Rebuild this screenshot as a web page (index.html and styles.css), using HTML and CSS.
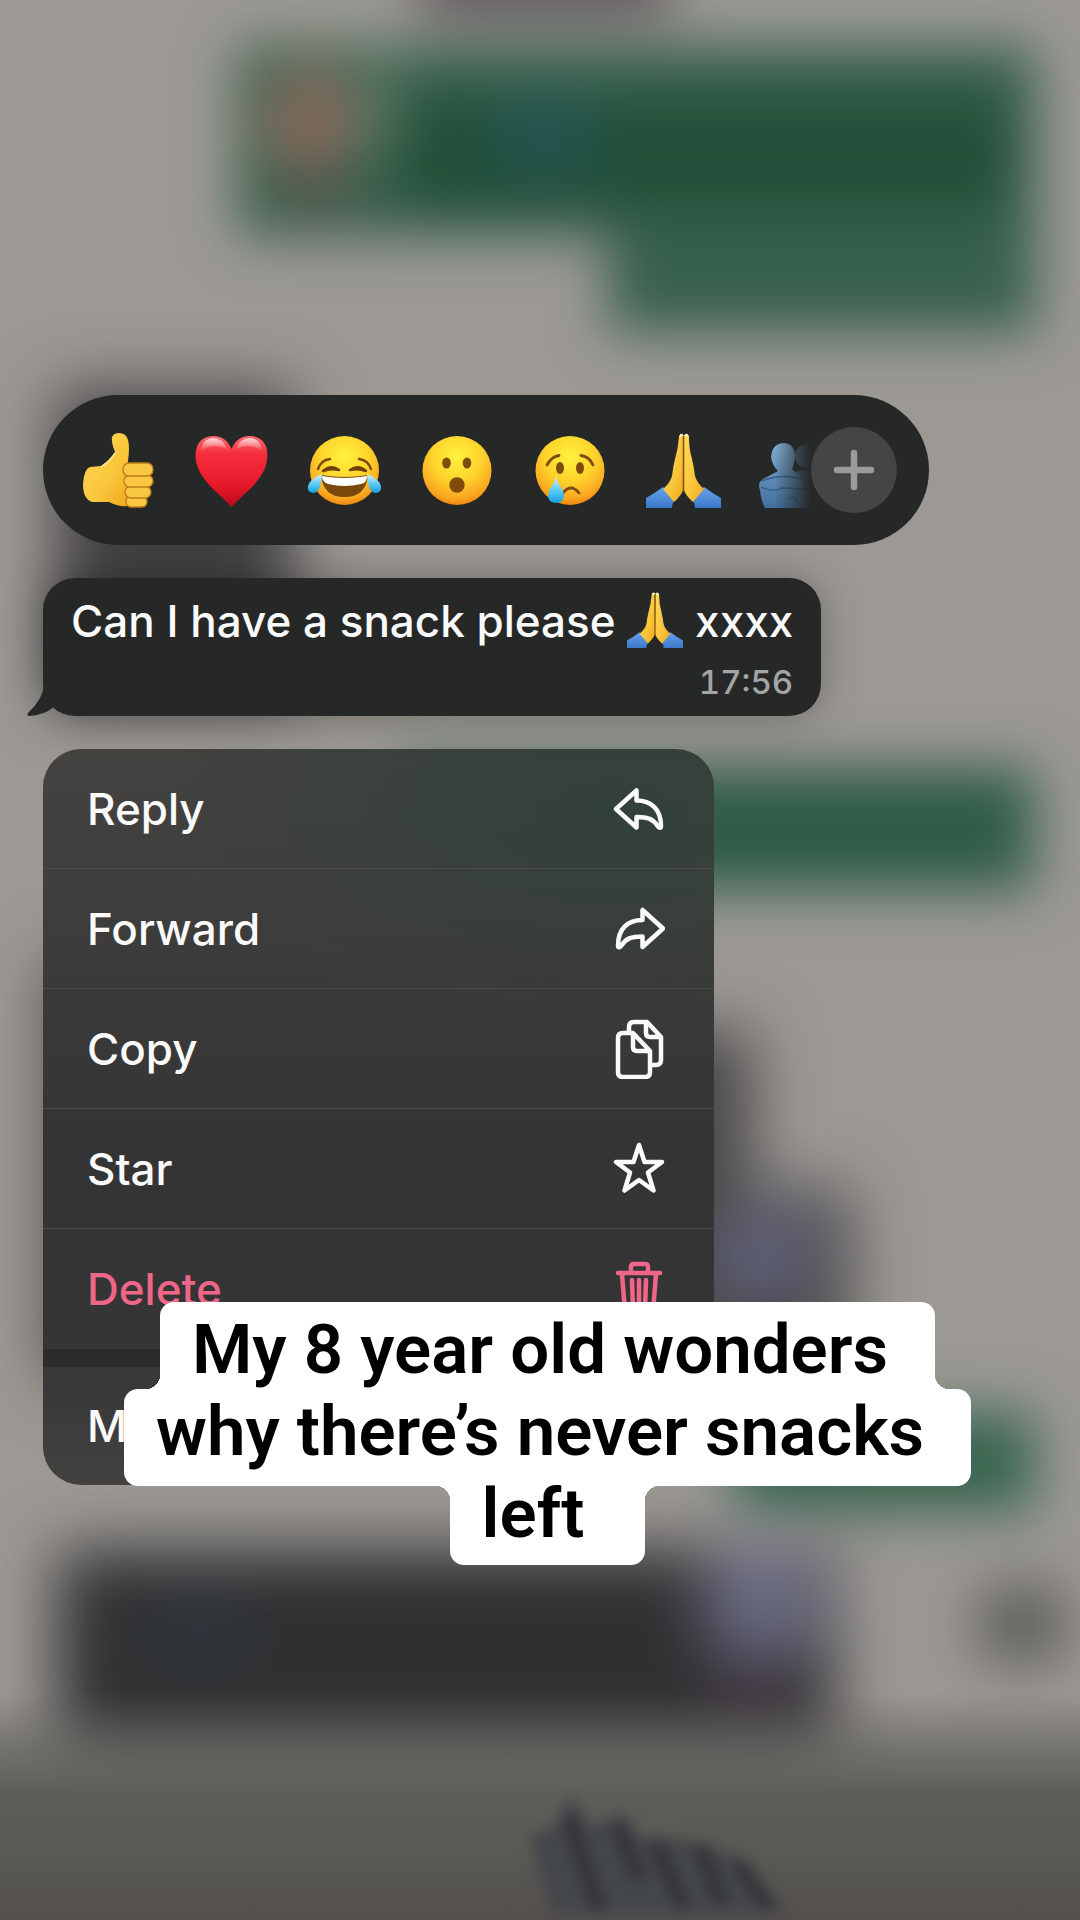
FILE: index.html
```html
<!DOCTYPE html>
<html lang="en">
<head>
<meta charset="utf-8">
<meta name="viewport" content="width=device-width, initial-scale=1">
<title>Message actions</title>
<link rel="stylesheet" href="styles.css">
</head>
<body>
<svg class="defs" aria-hidden="true">
  <defs>
    <radialGradient id="face" cx=".5" cy=".3" r=".72"><stop offset="0" stop-color="#fff23c"/><stop offset=".5" stop-color="#fed32c"/><stop offset=".85" stop-color="#f9a51f"/><stop offset="1" stop-color="#ea8010"/></radialGradient>
    <linearGradient id="skin" x1="0" y1="0" x2="1" y2="1"><stop offset="0" stop-color="#ffdb5c"/><stop offset=".6" stop-color="#f9c53a"/><stop offset="1" stop-color="#f0a51f"/></linearGradient>
    <linearGradient id="heart" x1="0" y1="0" x2="0" y2="1"><stop offset="0" stop-color="#ff6b70"/><stop offset=".25" stop-color="#f62e3c"/><stop offset=".65" stop-color="#e91b2c"/><stop offset="1" stop-color="#bd0a1c"/></linearGradient>
    <linearGradient id="gloss" x1="0" y1="0" x2="0" y2="1"><stop offset="0" stop-color="#fff" stop-opacity=".75"/><stop offset="1" stop-color="#fff" stop-opacity="0"/></linearGradient>
    <linearGradient id="tear" x1="0" y1="0" x2="0" y2="1"><stop offset="0" stop-color="#d4f5fb"/><stop offset=".5" stop-color="#62cdf2"/><stop offset="1" stop-color="#129fe6"/></linearGradient>
    <linearGradient id="sleeve" x1="0" y1="0" x2="0" y2="1"><stop offset="0" stop-color="#69a3ec"/><stop offset="1" stop-color="#3d78c8"/></linearGradient>
    <linearGradient id="hug" x1="0" y1="0" x2="0" y2="1"><stop offset="0" stop-color="#82add2"/><stop offset="1" stop-color="#436f9c"/></linearGradient>
    <symbol id="pray" viewBox="0 0 75 75">
      <path d="M0 65Q9 60 17 54L29 67Q26 70 26 75H0ZM75 65Q66 60 58 54L46 67Q49 70 49 75H75Z" fill="url(#sleeve)"/>
      <path d="M37 2Q34 0 33 4Q32 16 29 26Q27 34 26 43Q24 50 17 56L28 69Q36 62 37.500 56Z" fill="url(#skin)"/>
      <path d="M38 2Q42 0 43 4Q43 16 46 26Q48 34 49 43Q51 50 58 56L47 69Q39 62 37.500 56Z" fill="url(#skin)"/>
      <path d="M37.500 3V58" stroke="#8a5208" stroke-width="1.600"/>
      <path d="M34 4Q35 0 37 3M39 3Q41 0 42 4" stroke="#fff1b8" stroke-width="2" fill="none"/>
    </symbol>
  </defs>
</svg>

<main class="screen">
  <svg class="backdrop" viewBox="0 0 1080 1920" preserveAspectRatio="none" aria-hidden="true">
    <defs>
      <filter id="soft" x="-50%" y="-50%" width="200%" height="200%" color-interpolation-filters="sRGB"><feGaussianBlur stdDeviation="27"/></filter>
      <filter id="softer" x="-50%" y="-50%" width="200%" height="200%" color-interpolation-filters="sRGB"><feGaussianBlur stdDeviation="32"/></filter>
      <filter id="slight" x="-20%" y="-20%" width="140%" height="140%" color-interpolation-filters="sRGB"><feGaussianBlur stdDeviation="7"/></filter>
      <linearGradient id="floor" x1="0" y1="0" x2="0" y2="1"><stop offset="0" stop-color="#5a5955" stop-opacity="0"/><stop offset=".25" stop-color="#5a5955" stop-opacity=".6"/><stop offset=".45" stop-color="#5e5d59"/><stop offset=".7" stop-color="#5a5954"/><stop offset="1" stop-color="#524f4d"/></linearGradient>
    </defs>
    <rect width="1080" height="1920" fill="#9c9994"/>
    <g filter="url(#soft)">
      <path d="M238 46H1036V332H608V236H238Z" fill="#37604c"/>
      <path d="M400 100H1010V210H400Z" fill="#224f39"/>
      <path d="M500 100H590V170H500Z" fill="#235351"/>
      <ellipse cx="310" cy="120" rx="50" ry="56" fill="#81695a"/>
      <ellipse cx="380" cy="105" rx="14" ry="54" fill="#64806f"/>
      <ellipse cx="315" cy="198" rx="40" ry="26" fill="#4b554c"/>
      <path d="M420 -50H670V14H420Z" fill="#5d5659"/>
      <rect x="400" y="768" width="634" height="122" fill="#2f5c47"/>
      <rect x="735" y="1412" width="300" height="100" fill="#38654f"/>
    </g>
    <g filter="url(#softer)">
      <rect x="56" y="390" width="236" height="310" fill="#424142"/>
      <rect x="50" y="960" width="120" height="420" fill="#4c4b4b"/>
      <path d="M600 1030H752V1190H850V1380H600Z" fill="#484747"/>
      <ellipse cx="762" cy="1255" rx="58" ry="50" fill="#5f6179"/>
      <rect x="58" y="1550" width="776" height="200" fill="#303031"/>
      <ellipse cx="200" cy="1630" rx="55" ry="34" fill="#2d363e"/>
      <ellipse cx="762" cy="1602" rx="62" ry="62" fill="#696b83"/>
      <ellipse cx="752" cy="1684" rx="44" ry="28" fill="#433844"/>
      <ellipse cx="1022" cy="1624" rx="44" ry="36" fill="#484844"/>
    </g>
    <rect y="1692" width="1080" height="228" fill="url(#floor)"/>
    <g filter="url(#slight)">
      <path d="M530 1836L556 1826L570 1796L592 1826L624 1812L640 1838L662 1838L700 1842L742 1860L784 1912H552Z" fill="#43464a"/>
      <path d="M568 1816L600 1912M618 1826L640 1880M655 1842L684 1908M700 1846L722 1904M738 1862L770 1908" fill="none" stroke="#303238" stroke-width="13"/>
    </g>
  </svg>

  <div class="stack">
    <div class="reactions">
      <div class="reaction-list">
        <button class="reaction" aria-label="Thumbs up">
          <svg viewBox="0 0 75 75"><path d="M31 4Q33 0 38 0Q45 0 47 7Q49 14 47 28L46 35H50L47 73Q37 74 28 69H11Q2 66 2 51Q3 36 9 34L20 33Q29 27 34 19Q30 9 31 4Z" fill="url(#skin)"/><g fill="#f9c744" stroke="#bd7d16" stroke-width="1.300"><rect x="45" y="63" width="21" height="11" rx="5"/><rect x="44" y="53" width="26" height="12" rx="6"/><rect x="43" y="42" width="29" height="12" rx="6"/><rect x="42" y="30" width="30" height="13" rx="6"/></g><path d="M20 34Q30 27 34 20" fill="none" stroke="#fff0a0" stroke-width="1.500"/></svg>
        </button>
        <button class="reaction" aria-label="Red heart">
          <svg viewBox="0 0 75 75"><path d="M37.500 74Q33 69 20 57Q1 39 1.500 22Q2 4 19 3Q32 3 37.500 16Q43 3 56 3Q73 4 73.500 22Q74 39 55 57Q42 69 37.500 74Z" fill="url(#heart)"/><path d="M7 18Q8 6 19 5Q29 5 33 16Q19 9 7 18ZM68 18Q67 6 56 5Q46 5 42 16Q56 9 68 18Z" fill="url(#gloss)"/></svg>
        </button>
        <button class="reaction" aria-label="Tears of joy">
          <svg viewBox="0 0 75 75"><circle cx="37.500" cy="37.500" r="34.500" fill="url(#face)"/><path d="M11 36Q14 27 23 26M52 26Q61 27 64 36" fill="none" stroke="#7d4c0c" stroke-width="2.500" stroke-linecap="round"/><path d="M16 38Q24 31 32 37Q24 35 16 38ZM43 37Q51 31 59 38Q51 35 43 37Z" fill="#70420a" stroke="#70420a" stroke-width="2.500" stroke-linejoin="round"/><path d="M14 42Q37 46 61 42Q59 64 37.500 64Q16 64 14 42Z" fill="#7a490a"/><path d="M15 43Q37 47 60 43Q60 50 54 51Q37 55 21 51Q15 49 15 43Z" fill="#fff"/><path d="M15 41Q14 60 6 60Q0 59 1 53Q3 46 15 41ZM60 41Q61 60 69 60Q75 59 74 53Q72 46 60 41Z" fill="url(#tear)"/></svg>
        </button>
        <button class="reaction" aria-label="Surprised">
          <svg viewBox="0 0 75 75"><circle cx="37" cy="37.500" r="34.500" fill="url(#face)"/><g fill="#7f4c0b"><ellipse cx="26.500" cy="30" rx="4.300" ry="5.500"/><ellipse cx="47" cy="30" rx="4.300" ry="5.500"/><circle cx="37" cy="52" r="7.700"/></g></svg>
        </button>
        <button class="reaction" aria-label="Crying">
          <svg viewBox="0 0 75 75"><circle cx="37" cy="37.500" r="34.500" fill="url(#face)"/><g fill="#7f4c0b"><ellipse cx="27" cy="35" rx="4" ry="6"/><ellipse cx="47" cy="35" rx="4" ry="6"/></g><path d="M14 32Q18 24 26 22.500M48 22.500Q57 24 60 32M30 60Q38 50 46 60" fill="none" stroke="#7f4c0b" stroke-width="2.800" stroke-linecap="round"/><path d="M23 43Q24 49 29 56Q33 63 29 68Q23 72 17 68Q13 63 17 56Q22 49 23 43Z" fill="url(#tear)"/></svg>
        </button>
        <button class="reaction" aria-label="Folded hands"><svg><use href="#pray"/></svg></button>
        <button class="reaction" aria-label="People hugging">
          <svg viewBox="0 0 75 75"><circle cx="48" cy="23" r="12" fill="#55779a"/><path d="M38 38Q58 34 64 50V75H38Z" fill="#4a7199"/><path d="M24 10Q35 10 36 22Q36 30 33 36Q39 40 43 46L51 75H6Q2 68 1 57Q-2 50 4 46L19 38Q13 32 12 24Q13 11 24 10Z" fill="url(#hug)"/><path d="M2 48Q23 40 43 46M2 54Q14 60 23 55L47 56M27 67Q34 61 39 69" fill="none" stroke="#34618e" stroke-width="1.500"/></svg>
        </button>
      </div>
      <button class="more-reactions" aria-label="More reactions"><svg viewBox="0 0 86 86"><path d="M43 26V60M26 43H60" stroke="#9b9b9e" stroke-width="6.500" stroke-linecap="round"/></svg></button>
    </div>

    <article class="bubble">
      <svg class="tail" viewBox="0 0 30 40" aria-hidden="true"><path d="M17 0V8Q16 22 1 36Q-1 39 3 39Q17 38 27 30L30 0Z" fill="#262827"/></svg>
      <p class="message">Can I have a snack please <svg class="inline-emoji" role="img" aria-label="folded hands"><use href="#pray"/></svg> xxxx</p>
      <time class="time" datetime="17:56">17:56</time>
    </article>

    <div class="menu" role="menu">
      <button class="item" role="menuitem">Reply
        <svg class="icon" viewBox="0 0 52 60"><path d="M3 30L23.500 11.500V21.500C38 21.500 48 30 48 47C48 49.500 46 49 45 47.500C40 40 35 38 23.500 38V48.500Z"/></svg></button>
      <button class="item" role="menuitem">Forward
        <svg class="icon" viewBox="0 0 52 60"><path d="M50 29.500L29.500 11V21C15 21 5 29.500 5 46.500C5 49 7 48.500 8 47C13 39.500 18 37.500 29.500 37.500V48Z"/></svg></button>
      <button class="item" role="menuitem">Copy
        <svg class="icon" viewBox="0 0 52 60"><path d="M16 14V8Q16 3 21 3H34L48 18V41Q48 46 43 46H38M33 4V14Q33 18 37 18H47M10 14H20L37 32V53Q37 58 32 58H10Q5 58 5 53V19Q5 14 10 14ZM20 15V28Q20 32 24 32H36"/></svg></button>
      <button class="item" role="menuitem">Star
        <svg class="icon" viewBox="0 0 52 60"><path d="M26 6L31.500 23H49L35 33.500L40.500 51.500L26 41L11.500 51.500L17 33.500L3 23H20.500Z"/></svg></button>
      <button class="item danger" role="menuitem">Delete
        <svg class="icon" viewBox="0 0 52 60"><path d="M5 14H47M18 13V8Q18 5 21 5H32Q35 5 35 8V13M9 15L12 53Q12 57 16 57H36Q40 57 40 53L43 15M19 21L20 50M26 21V50M33 21L32 50"/></svg></button>
      <div class="divider" role="separator"></div>
      <button class="item" role="menuitem">More…</button>
    </div>
  </div>

  <h1 class="caption">
    <span class="line upper">My 8 year old wonders</span>
    <span class="line">why there’s never snacks</span>
    <span class="line lower">left</span>
  </h1>
</main>
</body>
</html>
```
FILE: styles.css
```css
* {
  box-sizing: border-box;
}

body {
  margin: 0;
  background: #9c9994;
  font-family: Inter, "Liberation Sans", sans-serif;
}

button {
  margin: 0;
  padding: 0;
  border: 0;
  background: none;
  color: inherit;
  font: inherit;
}

.defs {
  position: absolute;
  width: 0;
  height: 0;
}

.screen {
  position: relative;
  min-height: 100vh;
  overflow: hidden;
}

.backdrop {
  position: absolute;
  inset: 0;
  width: 100%;
  height: 100%;
}

.stack {
  position: relative;
  display: flex;
  flex-direction: column;
  align-items: flex-start;
  gap: 33px;
  padding: 395px 43px 0;
}

.reactions {
  display: flex;
  align-items: center;
  width: 100%;
  max-width: 886px;
  height: 150px;
  padding: 0 32px 0 38px;
  border-radius: 75px;
  background: #262827;
}

.reaction-list {
  display: flex;
  flex: 1;
  gap: 38px;
  min-width: 0;
  overflow: hidden;
  mask-image: linear-gradient(to left, transparent, #000 36px);
}

.reaction {
  flex: none;
  width: 75px;
  height: 75px;
}

.reaction svg,
.more-reactions svg {
  display: block;
  width: 100%;
  height: 100%;
}

.more-reactions {
  flex: none;
  width: 86px;
  height: 86px;
  border-radius: 50%;
  background: #454547;
}

.bubble {
  position: relative;
  display: flex;
  flex-direction: column;
  gap: 8px;
  padding: 12px 28px;
  border-radius: 32px;
  background: #262827;
  color: #fafafa;
  box-shadow: 0 0 40px rgb(0 0 0 / 30%);
}

.tail {
  position: absolute;
  left: -16px;
  bottom: -1px;
  width: 30px;
  height: 40px;
}

.message {
  margin: 0;
  font-size: 44px;
  font-weight: 550;
  line-height: 62px;
}

.inline-emoji {
  width: 56px;
  height: 56px;
  vertical-align: -11px;
}

.time {
  align-self: flex-end;
  color: #a3a4a4;
  font-size: 33px;
  font-weight: 500;
  font-variant-numeric: tabular-nums;
  line-height: 44px;
}

.menu {
  width: 100%;
  max-width: 671px;
  overflow: hidden;
  border-radius: 38px;
  background:
    radial-gradient(ellipse 70% 30% at 85% 8%, #32403a, transparent),
    linear-gradient(#444340, #3c3b3b 30%, #343435 55%, #353536 80%, #424140);
  color: #fafafa;
}

.item {
  display: flex;
  align-items: center;
  justify-content: space-between;
  width: 100%;
  height: 120px;
  padding: 0 49px 0 44px;
  border-bottom: 1px solid #4b4b4a;
  font-size: 44px;
  font-weight: 550;
  text-align: left;
}

.danger {
  border-bottom: 0;
  color: #ef6688;
}

.item:last-child {
  height: 118px;
  border-bottom: 0;
}

.divider {
  height: 18px;
  background: #2b2b2b;
}

.icon {
  width: 52px;
  height: 60px;
  fill: none;
  stroke: currentColor;
  stroke-width: 4.500;
  stroke-linecap: round;
  stroke-linejoin: round;
}

.caption {
  position: absolute;
  top: 1302px;
  left: 0;
  right: 0;
  display: flex;
  flex-direction: column;
  align-items: center;
  margin: 0;
  padding-left: 15px;
  color: #000;
  font-family: Roboto, "Liberation Sans", sans-serif;
  font-size: 69px;
  font-weight: 600;
  line-height: 55px;
}

.line {
  position: relative;
  padding: 15px 47px 27px 32px;
  border-radius: 14px;
  background: #fff;
}

.upper {
  padding: 20px 47px 12px 32px;
  border-radius: 14px 14px 0 0;
}

.lower {
  padding: 0 61px 24px 32px;
  border-radius: 0 0 14px 14px;
}

.upper::before,
.upper::after,
.lower::before,
.lower::after {
  content: "";
  position: absolute;
  width: 14px;
  height: 14px;
}

.upper::before,
.upper::after {
  bottom: 0;
}

.lower::before,
.lower::after {
  top: 0;
}

.upper::before,
.lower::before {
  right: 100%;
}

.upper::after,
.lower::after {
  left: 100%;
}

.upper::before {
  background: radial-gradient(circle at 0 0, transparent 14px, #fff 14px);
}

.upper::after {
  background: radial-gradient(circle at 100% 0, transparent 14px, #fff 14px);
}

.lower::before {
  background: radial-gradient(circle at 0 100%, transparent 14px, #fff 14px);
}

.lower::after {
  background: radial-gradient(circle at 100% 100%, transparent 14px, #fff 14px);
}
```
